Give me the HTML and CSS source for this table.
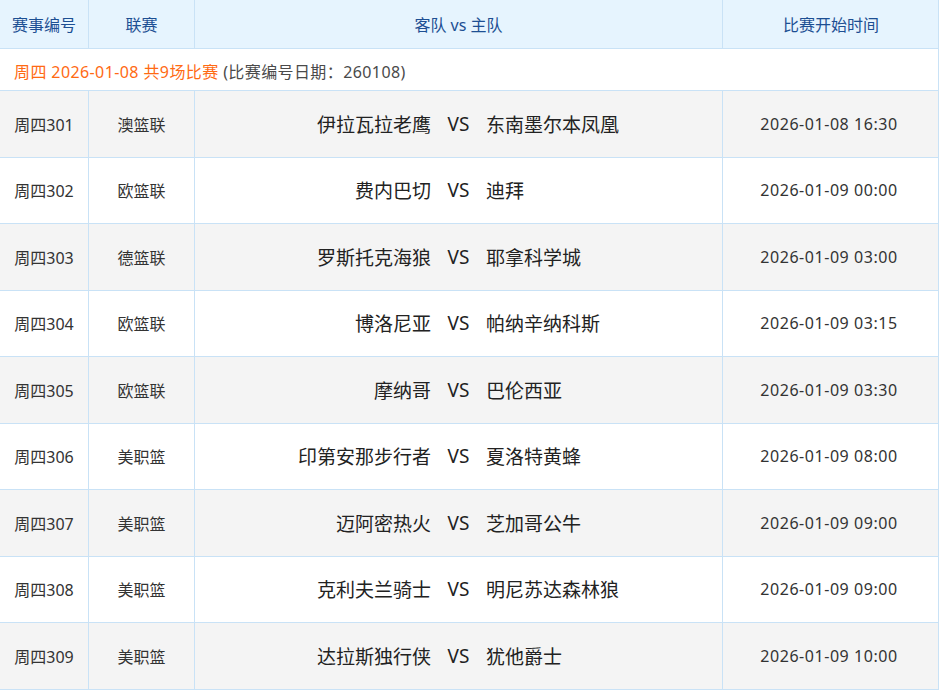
FILE: index.html
```html
<!DOCTYPE html>
<html lang="zh-CN">
<head>
<meta charset="utf-8">
<link rel="stylesheet" href="styles.css">
</head>
<body>
<div class="table">
  <div class="row head">
    <div class="cell">赛事编号</div>
    <div class="cell">联赛</div>
    <div class="cell">客队 vs 主队</div>
    <div class="cell">比赛开始时间</div>
  </div>
  <div class="row date">
    <span class="hl">周四 2026-01-08 共9场比赛</span> <span class="note">(比赛编号日期<span class="cjk">：</span>260108)</span>
  </div>
  <div class="row game odd">
    <div class="cell">周四301</div><div class="cell">澳篮联</div>
    <div class="cell teams"><span class="away">伊拉瓦拉老鹰</span><span class="vs">VS</span><span class="home">东南墨尔本凤凰</span></div>
    <div class="cell time">2026-01-08 16:30</div>
  </div>
  <div class="row game">
    <div class="cell">周四302</div><div class="cell">欧篮联</div>
    <div class="cell teams"><span class="away">费内巴切</span><span class="vs">VS</span><span class="home">迪拜</span></div>
    <div class="cell time">2026-01-09 00:00</div>
  </div>
  <div class="row game odd">
    <div class="cell">周四303</div><div class="cell">德篮联</div>
    <div class="cell teams"><span class="away">罗斯托克海狼</span><span class="vs">VS</span><span class="home">耶拿科学城</span></div>
    <div class="cell time">2026-01-09 03:00</div>
  </div>
  <div class="row game">
    <div class="cell">周四304</div><div class="cell">欧篮联</div>
    <div class="cell teams"><span class="away">博洛尼亚</span><span class="vs">VS</span><span class="home">帕纳辛纳科斯</span></div>
    <div class="cell time">2026-01-09 03:15</div>
  </div>
  <div class="row game odd">
    <div class="cell">周四305</div><div class="cell">欧篮联</div>
    <div class="cell teams"><span class="away">摩纳哥</span><span class="vs">VS</span><span class="home">巴伦西亚</span></div>
    <div class="cell time">2026-01-09 03:30</div>
  </div>
  <div class="row game">
    <div class="cell">周四306</div><div class="cell">美职篮</div>
    <div class="cell teams"><span class="away">印第安那步行者</span><span class="vs">VS</span><span class="home">夏洛特黄蜂</span></div>
    <div class="cell time">2026-01-09 08:00</div>
  </div>
  <div class="row game odd">
    <div class="cell">周四307</div><div class="cell">美职篮</div>
    <div class="cell teams"><span class="away">迈阿密热火</span><span class="vs">VS</span><span class="home">芝加哥公牛</span></div>
    <div class="cell time">2026-01-09 09:00</div>
  </div>
  <div class="row game">
    <div class="cell">周四308</div><div class="cell">美职篮</div>
    <div class="cell teams"><span class="away">克利夫兰骑士</span><span class="vs">VS</span><span class="home">明尼苏达森林狼</span></div>
    <div class="cell time">2026-01-09 09:00</div>
  </div>
  <div class="row game odd">
    <div class="cell">周四309</div><div class="cell">美职篮</div>
    <div class="cell teams"><span class="away">达拉斯独行侠</span><span class="vs">VS</span><span class="home">犹他爵士</span></div>
    <div class="cell time">2026-01-09 10:00</div>
  </div>
</div>
</body>
</html>
```

FILE: styles.css
```css
* { box-sizing: border-box; }
html, body { margin: 0; padding: 0; background: #fff; }
body {
  font-family: "Noto Sans", "Noto Sans CJK SC", sans-serif;
  font-size: 16px;
  color: #333;
}
.table { width: 939px; }
.row {
  display: grid;
  grid-template-columns: 89px 106px 528px 216px;
  border-bottom: 1px solid #c9e2f6;
  border-right: 1px solid #c9e2f6;
}
.cell {
  display: flex;
  align-items: center;
  justify-content: center;
  border-right: 1px solid #c9e2f6;
  white-space: nowrap;
}
.cell:last-child { border-right: none; }
.head { height: 49px; background: #e6f4fe; color: #1d4f93; }
.date {
  display: block;
  height: 42px;
  line-height: 40px;
  padding-top: 2px;
  padding-left: 14px;
  background: #fff;
  letter-spacing: 0.4px;
}
.hl { color: #ff6a13; }
.note { color: #4a4a4a; }
.cjk { font-family: "Noto Sans CJK SC", sans-serif; }
.game { height: 66.5px; background: #fff; }
.game.odd { background: #f4f4f4; }
.time { letter-spacing: 0.55px; padding-right: 4px; }
.teams {
  display: grid;
  grid-template-columns: 1fr 55px 1fr;
  font-size: 19px;
  color: #222;
}
.away { text-align: right; }
.vs { text-align: center; }
.home { text-align: left; }
```
